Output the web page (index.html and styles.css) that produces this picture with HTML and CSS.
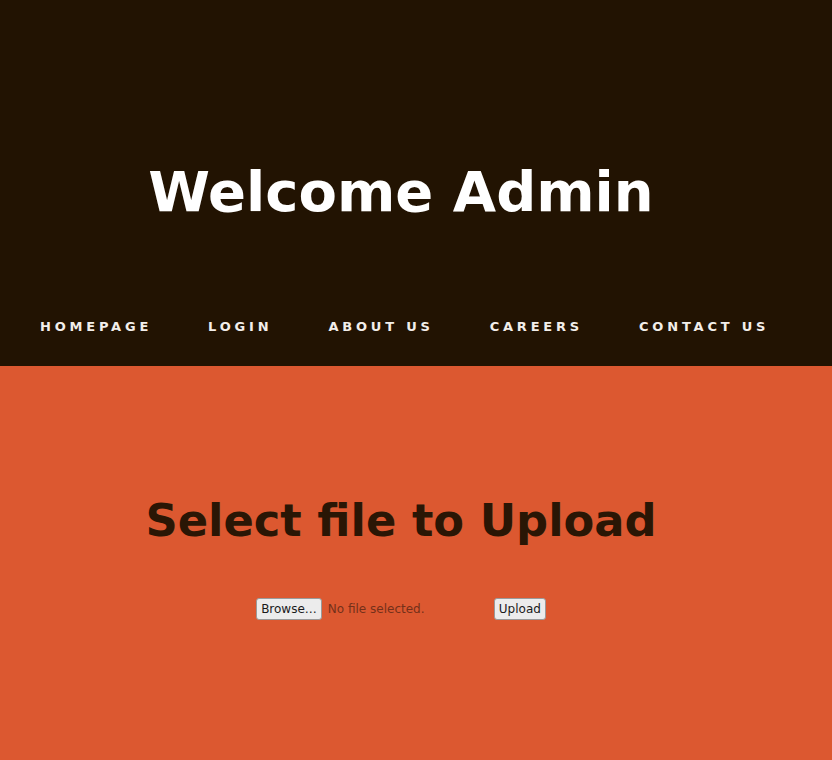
FILE: index.html
```html
<!DOCTYPE html>
<html lang="en">
<head>
<meta charset="utf-8">
<title>Welcome Admin</title>
<link rel="stylesheet" href="styles.css">
</head>
<body>
<header class="top">
  <h1 class="title">Welcome Admin</h1>
  <nav class="nav">
    <a href="#">HOMEPAGE</a>
    <a href="#">LOGIN</a>
    <a href="#">ABOUT US</a>
    <a href="#">CAREERS</a>
    <a href="#">CONTACT US</a>
  </nav>
</header>
<main class="upload">
  <h2 class="upload-title">Select file to Upload</h2>
  <form class="upload-row">
    <button type="button" class="btn">Browse…</button>
    <span class="file-label">No file selected.</span>
    <button type="button" class="btn">Upload</button>
  </form>
</main>
</body>
</html>
```
FILE: styles.css
```css
* { box-sizing: border-box; }
html, body { margin: 0; padding: 0; }
body {
  width: 832px;
  height: 760px;
  overflow: hidden;
  background: #dc5830;
  font-family: "DejaVu Sans", sans-serif;
}
.top {
  background: #221302;
  height: 366px;
  padding-top: 158px;
  display: flex;
  flex-direction: column;
}
.title {
  margin: 0;
  padding-right: 30px;
  text-align: center;
  color: #ffffff;
  font-size: 56px;
  line-height: 67px;
  font-weight: bold;
}
.nav {
  margin-top: 92px;
  display: flex;
  gap: 56px;
  padding-left: 40px;
}
.nav a {
  color: #f2eeea;
  text-decoration: none;
  font-size: 13px;
  line-height: 20px;
  font-weight: bold;
  letter-spacing: 3.8px;
}
.upload {
  padding-top: 128px;
  padding-right: 30px;
  display: flex;
  flex-direction: column;
  align-items: center;
}
.upload-title {
  margin: 0;
  color: #2a1605;
  font-size: 44.8px;
  line-height: 54px;
  font-weight: bold;
}
.upload-row {
  margin-top: 50px;
  display: flex;
  align-items: center;
}
.btn {
  font-family: "DejaVu Sans", sans-serif;
  font-size: 12px;
  color: #1a1a1a;
  background: #ececec;
  border: 1px solid #9a9a9a;
  border-radius: 3px;
  height: 22px;
  padding: 0 4px;
  line-height: 18px;
}
.file-label {
  width: 172px;
  padding-left: 6px;
  font-size: 12px;
  color: #74301a;
}
```
